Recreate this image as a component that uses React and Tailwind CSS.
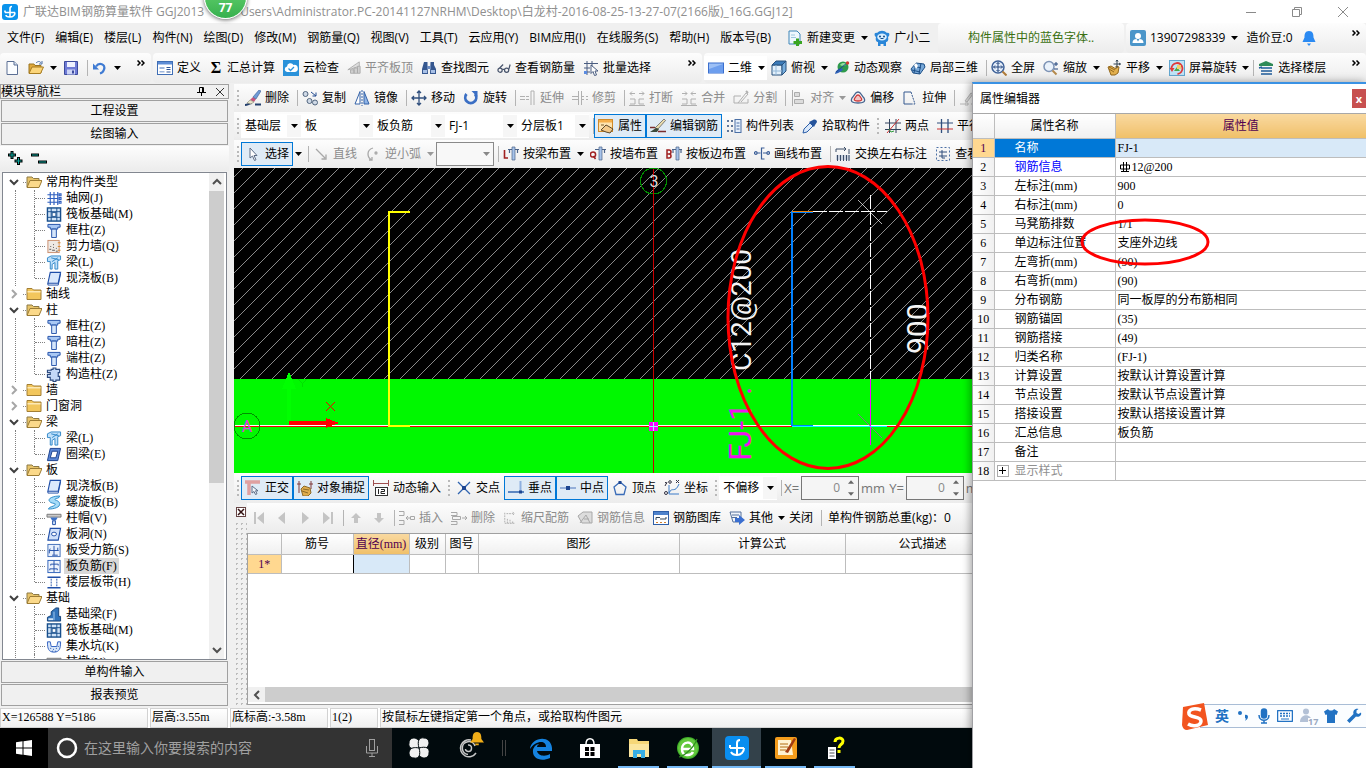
import React from 'react';
import clsx from 'clsx';

/* ── Icons, all on a 16x16 grid ── */
const icons = {
  app: <><rect width="16" height="16" rx="3" fill="#0a93ec" /><path d="M8 13V4.500a2 2 0 0 1 2-2M3 8.500h10M3 8.500v-2M13 8.500C13 11 11 13 8 13s-4-1-4-2" stroke="#fff" strokeWidth="1.600" fill="none" /></>,
  file: <><path d="M3 1.500h7l3.500 3.500v9.500H3z" fill="#fbfdff" stroke="#5b6f94" /><path d="M10 1.500V5h3.500" fill="#d7e3f3" stroke="#5b6f94" /></>,
  open: <><path d="M1 4h5l1 1.500h6V13H1z" fill="#e0a83a" stroke="#9a7420" /><path d="M1 13.500 4 7h11.500l-3 6.500z" fill="#fbd57a" stroke="#a87d22" /><path d="M8 3c2-2 4-2 5 0M14 1v3h-3" stroke="#4a6fa5" fill="none" /></>,
  save: <><path d="M1.500 1.500h13v13h-13z" fill="#6f7bd6" stroke="#3c4a9c" /><path d="M4 2h8v5H4z" fill="#eef1ff" /><path d="M4 9.500h8v5H4z" fill="#cdd5f6" /><path d="M9 10.500h2v3H9z" fill="#3c4a9c" /></>,
  undo: <><path d="M4 6.500C7 2 14 4 12 9.500 11.500 11.500 9.500 13 8 13.500" stroke="#3f7bd3" strokeWidth="2.200" fill="none" /><path d="M1 3.500v6h6z" fill="#3f7bd3" /></>,
  define: <><rect x=".5" y="1.500" width="15" height="13" fill="#fff" stroke="#3f6eb5" /><path d="M1 2h14v2.500H1z" fill="#5d8dd6" /><path d="M2.500 7h5v2h-5zM2.500 11h5v1.500h-5z" fill="#9fb7dd" /><path d="M9.500 7.500h4M9.500 9.500h4M9.500 12h4" stroke="#2f5597" /></>,
  cloud: <><rect width="16" height="16" fill="#2a92da" /><path d="M4 12a2.800 2.800 0 0 1 0-5.500A3.500 3.500 0 0 1 10.500 5 3.200 3.200 0 0 1 12 12z" fill="#fff" /><path d="m5.500 8.500 2 2L11 7" stroke="#2a92da" strokeWidth="1.300" fill="none" /></>,
  flat: <g fill="none" stroke="#a9a9a9"><path d="M1 10 11 3l3-2v5L5 9z" fill="#dedede" /><path d="M4 10h4v4H4zM8 8h4v6H8zM12 6h3v8h-3z" fill="#cfcfcf" /></g>,
  find: <><path d="M3 2h3.500v3L7 14H1V9zM9.500 2H13v3l2 4v5H9z" fill="#35578f" /><path d="M6 6h4v3H6z" fill="#6d8cc0" /><path d="M2 10h4v3H2zM10 10h4v3h-4z" fill="#a8c0e6" /></>,
  glasses: <g fill="none" stroke="#47536b" strokeWidth="1.400"><circle cx="3.500" cy="10.500" r="2.400" /><circle cx="11" cy="10.500" r="2.400" /><path d="M6 9.500h2.500M3 8l4-4M13.500 9.500 15 4" /></g>,
  batch: <><path d="M1 3.500h14M1 8h6M1 12h6M4 1v14M9 1v6" stroke="#4a5d80" fill="none" /><path d="M1 11h3v3H1z" fill="#5a8be0" /><path d="m8 5 7 6h-3l1.500 4-2 .5-1.500-4-2 2z" fill="#fff" stroke="#4a5d80" /></>,
  plane: <><rect x=".5" y="3" width="15" height="10" fill="#9dc0f6" stroke="#3b6fce" /><path d="M1 9 15 4v9H1z" fill="#6d9eee" /></>,
  cube: <><path d="M1 5h10v10H1z" fill="#e3f0fb" stroke="#27507c" /><path d="m1 5 4-4h10l-4 4z" fill="#3b7ab8" stroke="#27507c" /><path d="m11 15 4-4V1l-4 4z" fill="#78aede" stroke="#27507c" /><path d="M1 11h10M5 5v10" stroke="#93b8d8" /></>,
  orbit: <><circle cx="9" cy="7" r="5.500" fill="#2f9a4c" /><path d="M6 5c2-3 5-2 6-1s-3 3-6 1" fill="#8fdc9c" /><path d="M1 14C2 8 8 8 9 9s-4 4-8 5" fill="#2f62b8" /><path d="M2 12 13 3" stroke="#1f4b94" fill="none" /><circle cx="13.500" cy="3" r="1.700" fill="#d43b2f" /></>,
  local3d: <><path d="m1 9 5-6 8 1 1 3-5 7-7-1z" fill="#78a8d8" stroke="#1d4f87" /><path d="m4 6 7 2M6 3 4 13M11 3l-2 11M2 10l8 2" stroke="#1d4f87" fill="none" /><path d="m4 5 2-2 2 3-2 3z" fill="#fff" /></>,
  full: <><circle cx="7" cy="7" r="6" fill="#e6effb" stroke="#3f6299" strokeWidth="1.500" /><path d="M7 2.500v9M2.500 7h9M5.500 4 7 2.500 8.500 4M5.500 10 7 11.500 8.500 10M4 5.500 2.500 7 4 8.500M10 5.500 11.500 7 10 8.500" stroke="#23457c" fill="none" /><path d="m11.500 11.500 4 4" stroke="#b07c3a" strokeWidth="2" /></>,
  zoom: <><circle cx="6" cy="6.500" r="5" fill="#eaf2fb" stroke="#7d93b5" strokeWidth="1.500" /><path d="m9.500 10.500 4 4" stroke="#b58a4c" strokeWidth="2" /><path d="M11 4h4M13 2v4M11 9h4" stroke="#23457c" /></>,
  hand: <><path d="M2 7l3-1 5 3V6l3 1-1 6-3 2H5z" fill="#e3b04e" stroke="#94691f" /><path d="M3 9l5 3M3 7l6 3" stroke="#94691f" /><path d="M11 0v8M7.500 4h7M10 1.500 11 0l1 1.500M13 3l1.500 1L13 5" stroke="#345" fill="none" /></>,
  screenRotate: <><rect x=".5" y=".5" width="15" height="15" fill="#bfe3f7" stroke="#62a6cf" /><path d="M2.500 9a5.500 5.500 0 1 1 6 5" stroke="#e0383a" strokeWidth="1.800" fill="none" /><path d="M0.500 8h5L3 12z" fill="#e0383a" /><path d="m5 11 3-4 3 4z" fill="#4ca64c" /><path d="M8 5h4v4H8z" fill="#f2d16b" /></>,
  floors: <><path d="M1 4 8 1l7 3v2H1z" fill="#2f8a57" /><path d="M3 8h11M1 8l3-1M3 11h11M3 14h11" stroke="#1e5b99" strokeWidth="1.600" /></>,
  change: <><path d="M2 1h8l3 3v10H2z" fill="#eef7fd" stroke="#3e86b8" /><path d="M4 5h4M4 7.500h5" stroke="#9cc6de" /><path d="M9 8.500h3v2.500h3v3h-3V16H9v-2H6.500v-3H9z" fill="#3aa522" /></>,
  robot: <><path d="M2 7C0 6 0 2 3 3c3-3 7-3 10 0 3-1 3 3 1 4 1 4-1 5-2 5v4H9.500v-2h-3v2H4v-4c-1 0-3-1-2-5z" fill="#2a86d8" /><ellipse cx="8" cy="7" rx="4.800" ry="3.400" fill="#d9eeff" /><circle cx="6" cy="6.500" r="1" fill="#124c86" /><circle cx="10" cy="6.500" r="1" fill="#124c86" /><path d="M6.500 8.500h3" stroke="#124c86" /></>,
  user: <><rect width="16" height="16" rx="2" fill="#4a95c9" /><circle cx="8" cy="6" r="3" fill="#fff" /><path d="M2.500 13c0-4 3-4 5.500-4s5.500 0 5.500 4z" fill="#fff" /><path d="m6.500 9 1.500 2.500L9.500 9z" fill="#4a95c9" /></>,
  bell: <><path d="M8 1c4 0 4.500 3 4.500 6.500L14.500 12h-13l2-4.500C3.500 4 4 1 8 1z" fill="#2b8af2" /><path d="M6 13.500h4L8 16z" fill="#2b8af2" /></>,
  erase: <><path d="M0 15c3 0 4-2 7-2M10 14.500h6" stroke="#24406e" strokeWidth="2" fill="none" /><path d="m5 10 4 2 2-3-3-2z" fill="#c8547a" /><path d="m8 7 3 2 5-8-2-1z" fill="#6f9bd6" stroke="#3a5c93" strokeWidth=".6" /><path d="m2 13 3-3 4 2-3 2z" fill="#e9e4c8" stroke="#887" strokeWidth=".6" /></>,
  copy: <g fill="#cfd9e6" stroke="#52667f"><circle cx="3.500" cy="4" r="2.500" /><circle cx="7.500" cy="11" r="2.500" /><circle cx="13" cy="12.500" r="2.500" /><path d="m9 2 5 4M14 2.500V6h-3.500" fill="none" stroke="#234a8f" /></g>,
  mirror: <g stroke="#3563a8"><path d="M6 1.500V14H1z" fill="#fff" /><path d="M10 1.500V14h5z" fill="#8fb4e6" /><path d="M8 0v16" strokeDasharray="2 1" /></g>,
  move: <path d="M8 1v14M1 8h14M6 3l2-2 2 2M6 13l2 2 2-2M3 6 1 8l2 2M13 6l2 2-2 2" stroke="#304f7d" strokeWidth="1.300" fill="none" />,
  rotate: <><path d="M3.500 4a5.500 5.500 0 1 0 8.500 0" stroke="#3b6fc4" strokeWidth="2.800" fill="none" /><path d="M8.500 1h6v6z" fill="#3b6fc4" /></>,
  extend: <g stroke="#b0b0b0" fill="none"><path d="M0 6.500h5M0 9.500h5M6 6.500h3M6 9.500h3" /><path d="M11 1v14M14 1v14M11 1h3" /></g>,
  trim: <g stroke="#b0b0b0" fill="none"><path d="M0 6.500h6M0 9.500h6M10 6.500h2M14 6.500h2M10 9.500h2M14 9.500h2" /><path d="M6.500 1v14M9.500 1v14" /></g>,
  breakOff: <g stroke="#b0b0b0" fill="none"><path d="M1 3.500h5M10 3.500h5M3 1.500 1 3.500l2 2M13 1.500l2 2-2 2M1 9h5v5H1M15 9h-5v5h5M0 15.500h16" /></g>,
  merge: <g stroke="#b0b0b0" fill="none"><path d="M1 3.500h5M10 3.500h5M4 1.500l2 2-2 2M12 1.500l-2 2 2 2M1 9h5v5H1M15 9h-5v5h5M0 15.500h16" /></g>,
  split: <g stroke="#b0b0b0" fill="none"><path d="M1 6h7M1 13h14V9M1 6v7M5 13 13 3l2 1-7 8" /><path d="m13 1 2 2" strokeWidth="2" /></g>,
  align: <g stroke="#adadad" fill="#dcdcdc"><path d="M2.500 0v16" /><path d="M4.500 2.500h5v4h-5zM4.500 9.500h9v4h-9z" /></g>,
  offset: <g fill="none"><path d="M8 2c3 0 3 3 6 6 2 4-1 5-6 5s-8-1-6-5c3-3 3-6 6-6z" stroke="#46648f" strokeWidth="1.300" /><path d="M8 5c2 0 2 2 3.500 3.500 1 2-1 2.500-3.500 2.500s-4.500-.5-3.500-2.500C6 7 6 5 8 5z" stroke="#cf3b3b" strokeWidth="1.300" fill="#f2c3c3" /></g>,
  stretch: <g fill="none" stroke="#35588f"><path d="M9 2H2v12h7" /><path d="m9 2 4 12H9" strokeDasharray="2 1" /></g>,
  brush: <g fill="none" stroke="#b4b4b4"><path d="M1 14h4M12 14h3" /><path d="m6 11 6-8 2 1-6 8z" fill="#d9d9d9" /><path d="M6 13h3v2H6z" /></g>,
  props: <><rect x=".5" y="1.500" width="14" height="12" fill="#fde3b0" stroke="#d08a2a" /><path d="M1 2h13v2.500H1z" fill="#f4ae4a" /><path d="m3 12 5-5 2 1 5 3-3 4-4-1z" fill="#f3c98a" stroke="#5c472a" /><path d="M3 7h3" stroke="#7a5a2a" /></>,
  pen: <><path d="M0 9.500h5M8 13.500h8" stroke="#7a2e2e" strokeWidth="1.300" /><path d="m5 10 9-9 1.500 1.500L8 11z" fill="#e9dcae" stroke="#555" strokeWidth=".7" /><path d="m0 14 6-4 3 1-2 3z" fill="#3c4a3a" /></>,
  list: <><path d="M1 3h2M1 8h2M1 13h2M5 3h2M5 8h2M5 13h2" stroke="#304f7d" strokeWidth="1.500" /><rect x="9" y="1.500" width="6" height="13" fill="#e6effb" stroke="#4a6fa5" /><path d="M10.500 5h3M10.500 8h3M10.500 11h3" stroke="#4a6fa5" /></>,
  picker: <><path d="m1 15 1-4 6-6 3 3-6 6z" fill="#d9e8fa" stroke="#2c5ea8" /><path d="m7 4 5 5 1-2 2-3c0-2-2-3-4-2L9 3z" fill="#26549c" /></>,
  twoPoint: <><path d="M0 5h16M0 11.500h16M4.500 1v14M11 1v14" stroke="#32435e" fill="none" /><path d="M2 15 14 1" stroke="#c33" /><path d="m4 11 2 3 3-1" stroke="#2a9a3a" fill="none" /></>,
  parallel: <><path d="M4.500 1v14M11 1v14" stroke="#304f7d" strokeWidth="1.300" /><path d="M0 5h16" stroke="#304f7d" /><path d="M0 11h16" stroke="#c33" /></>,
  pointer: <path d="M5 2v10l2.500-2 2 4.500 1.500-.7L9 9.500h3z" fill="#fff" stroke="#5c6c86" />,
  lineDraw: <g fill="none" stroke="#a8a8a8" strokeWidth="1.300"><path d="m3 3 9 9M8.500 13H13V8.500" /></g>,
  arc: <g fill="none" stroke="#a8a8a8" strokeWidth="1.300"><path d="M8 2C1 4 2 12 7 14M4 14h3v-3" /><circle cx="11" cy="7" r="1" /></g>,
  beam: <><path d="M1.500 4v8H5" stroke="#a02020" strokeWidth="1.600" fill="none" /><path d="M5 3.500h11M14.500 3.500V7M6.500 3.500V7" stroke="#4a6288" strokeWidth="1.200" fill="none" /><path d="M9 1h3v13H9z" fill="#a7c3ea" stroke="#4a6288" strokeWidth=".7" /></>,
  wall: <><circle cx="3" cy="8.500" r="2.600" stroke="#a02020" strokeWidth="1.500" fill="none" /><path d="m3.500 10 2 3" stroke="#a02020" strokeWidth="1.500" /><path d="M5 3.500h11M14.500 3.500V7" stroke="#4a6288" strokeWidth="1.200" fill="none" /><path d="M9 1h3v13H9z" fill="#a7c3ea" stroke="#4a6288" strokeWidth=".7" /></>,
  slabEdge: <><path d="M1 4v8h2a2 2 0 0 0 0-4H1h2a2 2 0 0 0 0-4z" stroke="#a02020" strokeWidth="1.500" fill="none" /><path d="M6 3.500h10M15 3.500V7M7 3.500V7" stroke="#4a6288" strokeWidth="1.200" fill="none" /><path d="M10 1h3v13h-3z" fill="#a7c3ea" stroke="#4a6288" strokeWidth=".7" /></>,
  lineSet: <g fill="none" stroke="#3c5f98" strokeWidth="1.200"><circle cx="1.800" cy="7" r="1.300" /><path d="M3 7h3.500M9 7h4" /><circle cx="14.200" cy="7" r="1.300" /><path d="M10.500 2H7.500v11h3" /></g>,
  swap: <><path d="M1 6V3h10M14 8V3M9 1l2 2-2 2" stroke="#3b4c66" fill="none" /><path d="M1 9h14v5H1z" fill="#c9d1de" /><path d="M2.500 9v6M5.500 9v6M8.500 9v6M11.500 9v6M14 9v6" stroke="#3b4c66" /></>,
  viewLayout: <><rect x="1.500" y="1.500" width="13" height="13" fill="none" stroke="#4a6fa5" strokeDasharray="2 2" /><path d="M4 6h8M4 10h8M7 4v8h3" stroke="#304f7d" fill="none" /></>,
  ortho: <><path d="M0 2h15M4 1v14" stroke="#dfa0a0" strokeWidth="3.500" /><path d="M7 6v7l2-1.500 1.500 3 1.500-.7-1.500-3h2.500z" fill="#f2f6fb" stroke="#5c6c86" /></>,
  snap: <><path d="M2 1v12M14 1v8M0 4h4M12 4h4" stroke="#803a3a" fill="none" /><path d="m4 9 3-3 6 2 1 5-3 3H6z" fill="#e0ad4d" stroke="#8c6a28" /><path d="m6 9 6 1M5 11l6 2" stroke="#8c6a28" /></>,
  dynInput: <><path d="M.5 0v6M15.500 0v6M.5 3.500h15" stroke="#a05050" fill="none" /><rect x="2.500" y="7.500" width="12" height="8" fill="#fff" stroke="#333" /><path d="M5.500 9v5M8 9.500h3.500v2H8v2h4" stroke="#222" fill="none" /></>,
  cross: <><path d="M2 2l12 12M14 2 2 14" stroke="#2f64b0" strokeWidth="1.300" /><path d="M6 6h4v4H6z" fill="#1d4590" /></>,
  perp: <><path d="M12.500 1v10" stroke="#8fb0e0" strokeWidth="2" /><path d="M0 12h16" stroke="#2f64b0" strokeWidth="1.500" /><path d="M11 10.500h3v3h-3z" fill="#1d4590" /></>,
  mid: <><path d="M0 8h16" stroke="#6b8fc9" strokeWidth="1.300" /><path d="M6 6h4v4H6z" fill="#1d4590" /></>,
  vertex: <><path d="m8 2 6 5-2 7.500H4L2 7z" fill="none" stroke="#3a6cb8" strokeWidth="1.300" /><path d="M6.500 1h3v3h-3z" fill="#1d4590" /></>,
  coord: <><path d="M5 5v9h10M5 13c3-7 6 1 10-9" stroke="#3a7bc8" fill="none" /><path d="m1 2 2 2M3 2 1 6M12 0l3 3M15 0l-3 3" stroke="#334" fill="none" /><circle cx="2" cy="13" r="1.500" stroke="#334" fill="none" /><circle cx="6" cy="2" r="1.300" stroke="#334" fill="none" /></>,
  first: <path d="M3 2h2v12H3zM13 2v12L6 8z" fill="#c4c4c4" />,
  prev: <path d="M11 2v12L4 8z" fill="#c4c4c4" />,
  next: <path d="M5 2v12l7-6z" fill="#c4c4c4" />,
  last: <path d="M3 2v12l7-6zM11 2h2v12h-2z" fill="#c4c4c4" />,
  up: <path d="m8 3 5 5h-3v5H6V8H3z" fill="#c4c4c4" />,
  down: <path d="m8 13 5-5h-3V3H6v5H3z" fill="#c4c4c4" />,
  insertRow: <g fill="none" stroke="#a8a8a8"><path d="M0 1.500h5v4H0M0 10.500h5v4H0M7 8h4M9 6 7 8l2 2" /><path d="M11.500 6.500h4v3h-4z" /></g>,
  removeRow: <g fill="none" stroke="#a8a8a8"><path d="M0 2.500h6v3H0M1.500 6.500h8v3h-8zM0 11.500h6v3H0M11 8h5M14 6l2 2-2 2" /></g>,
  scale: <g fill="none" stroke="#a8a8a8"><path d="M2 2v12M4 3h9M11 1l2 2-2 2M5 9v5M8 10v4M11 12v2M2 14h12" strokeDasharray="2 1" /></g>,
  barInfo: <g fill="#dcdcdc" stroke="#a8a8a8"><path d="m1 6 5-4h9v11H5z" /><path d="m3 13 6-8 4 8M7 9h5" fill="none" /></g>,
  barLib: <><rect x=".5" y="1.500" width="15" height="13" fill="#fff" stroke="#2e5fa8" /><path d="M1 2h14v3H1z" fill="#4f83cc" /><path d="M3 10V7.500h4M7 9h6V7" stroke="#345" fill="none" /><path d="M3 12.500h10" stroke="#d08030" strokeDasharray="2 2" /></>,
  other: <><path d="M1 2h11v10H4z" fill="#f1f5fb" stroke="#55719c" /><path d="M3 5h7M3 7.500h5" stroke="#55719c" /><path d="M6 8h4V5l6 5-6 5v-3H6z" fill="#3b6fd0" /></>,
  /* tree */
  folderOpen: <><path d="M1 3h5l1.500 1.500H13V13H1z" fill="#e8c46a" stroke="#8e7a45" /><path d="M1 13.500 4 6.500h12L13 13.500z" fill="#fbd98a" stroke="#9c7c34" /></>,
  folder: <><path d="M1 2.500h5L7.500 4H15v9.500H1z" fill="#f2c65c" stroke="#a37f35" /><path d="M1.500 5h13v1.500h-13z" fill="#fde9b4" /></>,
  grid: <path d="M1 4h11M1 8h11M1 12h11M4 1v14M8 1v14M12 1v14M13.500 3h2v2h-2zM13.500 7h2v2h-2zM13.500 11h2v2h-2z" stroke="#2f5fc0" strokeWidth="1.200" fill="none" />,
  raft: <><rect x="1" y="1" width="14" height="14" fill="#cfe3f7" stroke="#174e8c" strokeWidth="1.500" /><path d="M5 1v14M11 1v14M1 5h14M1 11h14" stroke="#174e8c" /><rect x="6" y="6" width="4" height="4" fill="#fff" stroke="#174e8c" /></>,
  column: <><path d="M1.500 1.500h13v3h-2.500v2H4v-2H1.500z" fill="#a9c8f4" stroke="#1f4ea8" /><path d="M5.500 6.500h5v9h-5z" fill="#d5e6fb" stroke="#1f4ea8" /></>,
  shear: <><rect x="1.500" y="1.500" width="12" height="13" fill="#efe9e4" stroke="#c98c6c" /><path d="M3 11h2M6 12h3M4 8h1M10 10h1M7 9h1M10 13h2M7 6h1" stroke="#555" /><path d="M12 4h3M12 8h3M12 12h3" stroke="#d98a2f" /></>,
  beamIcon: <><path d="m1 3 4-2h10v4l-3 1v9H9V8l-3 2v5H4V7H1z" fill="#bfe0fa" stroke="#2f86c8" /><path d="m5 3 8 2M6 7l6-4" stroke="#2f86c8" /></>,
  slab: <><path d="M4 1.500h11L12.500 13H1.500z" fill="#dbe9fc" stroke="#1f4ea8" strokeWidth="1.200" /><path d="M1.500 13v2h11l2.500-12" fill="none" stroke="#1f4ea8" /></>,
  puzzle: <path d="M5 2.500h2V1h3v1.500h4V6h-1.500v4H14v4h-4v1.500H7V14H4v-3H1V8h3V6H1V3.500h4z" fill="#c3d8f7" stroke="#2c4a7f" strokeWidth="1.200" />,
  ring: <><path d="M4 1.500h11L12 14.500H1z" fill="#5b87d6" stroke="#173e8c" /><path d="M6 4.500h6l-2 7H4z" fill="#fff" stroke="#173e8c" /></>,
  spiral: <path d="M14 1C9 1 1 3 3 6.500S11 8 9 10.500 3 12 2 15c6 0 13-2 12-6S8 6 9 4.500 14 4 14 1z" fill="#a5dcf8" stroke="#2b8ac8" />,
  cap: <><path d="M.5 3.500h15v3H.5z" fill="#c9c9c9" stroke="#777" /><path d="m4 7 2 3h4l2-3z" fill="#3c72c8" /><path d="M6.500 10.500h3v4h-3z" fill="#d5e6fb" stroke="#1f4ea8" /></>,
  hole: <><path d="M4 1.500h11L12.500 14H1.500z" fill="#cfe0fa" stroke="#1f4ea8" strokeWidth="1.200" /><ellipse cx="8" cy="7.500" rx="2.600" ry="2" fill="#fff" stroke="#1f4ea8" /></>,
  forceBar: <><rect x="1.500" y="1.500" width="13" height="13" fill="#e8f0fc" stroke="#3e6cb8" /><path d="M3 8h10M4 6 3 8v3M8 3v10M6 13h6M12 5v3" stroke="#1f4ea8" fill="none" /></>,
  negBar: <><rect x="1.500" y="1.500" width="13" height="13" fill="#eef4fd" stroke="#2b5fb8" /><path d="M4.500 7V5.500h8V7M3.500 12v-1.500h8V12M8 2v12" stroke="#1f4ea8" fill="none" /></>,
  band: <><path d="M1 2.500h14M1 13.500h14" stroke="#1f4ea8" strokeWidth="1.600" /><path d="M5 4v9M11 4v9" stroke="#1f4ea8" strokeDasharray="2 1" /></>,
  footBeam: <><path d="m1 11 4-2V5l5-4h3v9h2v5H1z" fill="#3274bb" stroke="#123f75" /><path d="M2 12h5v2H2z" fill="#cfe3f7" /><path d="M8 5v9" stroke="#a7cdf2" /></>,
  sump: <><path d="M1 3h3l1 5h6l1-5h3c0 7-1 11-7 11S1 10 1 3z" fill="#d8e7fa" stroke="#2f5fc0" /><path d="M4 10h1M7 11h1M10 10h1M6 13h1M9 13h1M12 8h1" stroke="#1f4ea8" /></>,
};

const Icon = ({ name, className = 'size-4' }) => (
  <svg viewBox="0 0 16 16" className={clsx('shrink-0', className)} aria-hidden="true">{icons[name]}</svg>
);

const CaretIcon = ({ className = 'w-[7px] text-black' }) => (
  <svg viewBox="0 0 7 4" className={clsx('h-1 shrink-0', className)} aria-hidden="true"><path d="M0 0h7L3.500 4z" fill="currentColor" /></svg>
);

/* ── Toolbar parts ── */
const bar = 'bg-linear-to-b from-[#fdfdfd] to-[#ececec]';

const Grip = () => (
  <span className="flex h-4 w-[7px] shrink-0 flex-col items-center justify-between">
    {[0, 1, 2, 3].map((i) => <span key={i} className="size-0.5 bg-[#b9b9b9]" />)}
  </span>
);

const Sep = () => <span className="h-4 w-[5px] shrink-0 border-r border-[#b4b4b4]" />;

const Caret = ({ tight, disabled }) => (
  <button aria-label="展开" className={clsx('flex h-6 shrink-0 items-center justify-center', tight ? 'w-2' : 'w-[11px]', disabled ? 'text-[#999]' : 'text-black')}>
    <CaretIcon className="w-[7px]" />
  </button>
);

const Tool = ({ icon, label, active, disabled, narrow }) => (
  <button
    className={clsx(
      'flex h-6 shrink-0 items-center gap-1 border px-[3px] whitespace-nowrap',
      active ? 'border-[#0078d7] bg-[#dfebf6]' : 'border-transparent',
      disabled ? 'text-[#8c8c8c]' : 'text-black'
    )}
  >
    {icon === 'sigma' ? <span className="w-3.5 font-['Liberation_Serif'] text-[16px] font-bold">Σ</span>
      : icon && <Icon name={icon} className={narrow ? 'h-4 w-3.5' : 'size-4'} />}
    {label}
  </button>
);

const IconTool = ({ icon, label, className = 'w-6' }) => (
  <button aria-label={label} className={clsx('flex h-6 shrink-0 items-center justify-center', className)}><Icon name={icon} /></button>
);

const Combo = ({ label, value, className }) => (
  <span className={clsx('relative flex h-6 shrink-0 items-center', className)}>
    <select aria-label={label} className="h-full w-full appearance-none bg-white pr-3 pl-1 text-[12px]" defaultValue={value}>
      <option>{value}</option>
    </select>
    <span className="pointer-events-none absolute inset-y-px right-0 flex w-3.5 items-center justify-center bg-[#f6f6f6]"><CaretIcon /></span>
  </span>
);

const More = () => (
  <button aria-label="更多" className="mt-1 mr-1 flex h-3 w-3 shrink-0 items-center justify-center self-start">
    <svg viewBox="0 0 8 6" className="h-1.5 w-2" fill="none" stroke="#000" strokeWidth="1.500"><path d="m.5.500 2.500 2.500L.5 5.500M4.500.500 7 3 4.500 5.500" /></svg>
  </button>
);

const NumBox = ({ id, label }) => (
  <>
    <label htmlFor={id} className="px-0.5 text-[13px] text-[#777]">{label}</label>
    <span className="relative flex h-6 w-[58px] shrink-0 items-center border border-[#777] bg-[#f5f5f5]">
      <input id={id} defaultValue="0" className="w-full bg-transparent pr-[18px] text-right text-[12px] text-[#888]" />
      <span className="pointer-events-none absolute right-1 flex flex-col gap-2 text-[#666]">
        <CaretIcon className="w-1.5 rotate-180" />
        <CaretIcon className="w-1.5" />
      </span>
    </span>
    <span className="px-0.5 text-[13px] text-[#777]">mm</span>
  </>
);

/* ── Data ── */
const menus = ['文件(F)', '编辑(E)', '楼层(L)', '构件(N)', '绘图(D)', '修改(M)', '钢筋量(Q)', '视图(V)', '工具(T)', '云应用(Y)', 'BIM应用(I)', '在线服务(S)', '帮助(H)', '版本号(B)'];

const tree = [
  { label: '常用构件类型', items: [['grid', '轴网(J)'], ['raft', '筏板基础(M)'], ['column', '框柱(Z)'], ['shear', '剪力墙(Q)'], ['beamIcon', '梁(L)'], ['slab', '现浇板(B)']] },
  { label: '轴线' },
  { label: '柱', items: [['column', '框柱(Z)'], ['column', '暗柱(Z)'], ['column', '端柱(Z)'], ['puzzle', '构造柱(Z)']] },
  { label: '墙' },
  { label: '门窗洞' },
  { label: '梁', items: [['beamIcon', '梁(L)'], ['ring', '圈梁(E)']] },
  { label: '板', items: [['slab', '现浇板(B)'], ['spiral', '螺旋板(B)'], ['cap', '柱帽(V)'], ['hole', '板洞(N)'], ['forceBar', '板受力筋(S)'], ['negBar', '板负筋(F)'], ['band', '楼层板带(H)']] },
  { label: '基础', items: [['footBeam', '基础梁(F)'], ['raft', '筏板基础(M)'], ['sump', '集水坑(K)'], ['cap', '柱墩(Y)']] },
];

const props = [
  ['名称', 'FJ-1'], ['钢筋信息', '12@200'], ['左标注(mm)', '900'], ['右标注(mm)', '0'], ['马凳筋排数', '1/1'], ['单边标注位置', '支座外边线'],
  ['左弯折(mm)', '(90)'], ['右弯折(mm)', '(90)'], ['分布钢筋', '同一板厚的分布筋相同'], ['钢筋锚固', '(35)'], ['钢筋搭接', '(49)'], ['归类名称', '(FJ-1)'],
  ['计算设置', '按默认计算设置计算'], ['节点设置', '按默认节点设置计算'], ['搭接设置', '按默认搭接设置计算'], ['汇总信息', '板负筋'], ['备注', ''], ['显示样式', ''],
];

const song = "font-['Liberation_Serif','Noto_Sans_CJK_SC',serif]";

/* ── Title, menu and main toolbar ── */
const TitleBar = () => (
  <header className="relative flex h-[23px] shrink-0 items-center bg-white pl-0.5 text-[#8f8f8f]">
    <Icon name="app" />
    <h1 className="ml-[5px] flex min-w-0 flex-1 gap-9 text-[12px] whitespace-nowrap">
      <span>广联达BIM钢筋算量软件 GGJ2013</span>
      <span className="truncate">Users\Administrator.PC-20141127NRHM\Desktop\白龙村-2016-08-25-13-27-07(2166版)_16G.GGJ12]</span>
    </h1>
    <div className="flex text-[#8a8a8a]">
      {[['最小化', 'M0 5.500h10'], ['还原', 'M.5 2.500h7v7h-7zM2.500 2.500v-2h7v7h-2'], ['关闭', 'M0 0l10 10M10 0 0 10']].map(([label, d]) => (
        <button key={label} aria-label={label} className="flex h-[22px] w-[46px] items-center justify-center">
          <svg viewBox="0 0 10 10" className="size-2.5 overflow-visible" fill="none" stroke="currentColor"><path d={d} /></svg>
        </button>
      ))}
    </div>
    <div className="absolute -top-6 left-[204px] flex size-[43px] items-end justify-center rounded-full border border-white bg-linear-to-b from-[#6fdc78] to-[#36b04e] pb-1 text-[12px] leading-3 font-bold text-white shadow-[0_1px_4px_rgba(0,0,0,0.6)]">77</div>
  </header>
);

const MenuBar = () => (
  <nav className="flex h-[30px] shrink-0 items-center">
    <div className="flex gap-[11px] pr-3 pl-[7px]">
      {menus.map((m) => <a key={m} href="#" className="whitespace-nowrap">{m}</a>)}
    </div>
    <Tool icon="change" label="新建变更" />
    <Caret />
    <Tool icon="robot" label="广小二" />
    <div className={clsx('ml-1 flex h-full min-w-0 flex-1 items-center justify-center rounded-sm text-[#3a7010]', bar)}>构件属性中的蓝色字体..</div>
    <div className={clsx('ml-0.5 flex h-full w-[240px] shrink-0 items-center rounded-sm', bar)}>
      <Tool icon="user" label="13907298339" />
      <Caret />
      <span className="ml-1.5 whitespace-nowrap">造价豆:0</span>
      <span className="ml-1"><IconTool icon="bell" label="消息" /></span>
      <span className="flex-1" />
      <More />
    </div>
  </nav>
);

const MainToolbar = () => (
  <div className="flex h-[30px] shrink-0 gap-0.5 overflow-hidden">
    <div className={clsx('flex w-[151px] shrink-0 items-center rounded-sm', bar)}>
      <IconTool icon="file" label="新建" />
      <IconTool icon="open" label="打开" />
      <Caret />
      <IconTool icon="save" label="保存" />
      <Sep />
      <IconTool icon="undo" label="撤销" />
      <Caret />
      <span className="flex-1" />
      <More />
    </div>
    <div className={clsx('flex min-w-0 flex-1 items-center rounded-sm', bar)}>
      <Tool icon="define" label="定义" />
      <Tool icon="sigma" label="汇总计算" />
      <Tool icon="cloud" label="云检查" />
      <Tool icon="flat" label="平齐板顶" disabled narrow />
      <Tool icon="find" label="查找图元" />
      <Tool icon="glasses" label="查看钢筋量" narrow />
      <Tool icon="batch" label="批量选择" />
      <span className="flex-1" />
      <More />
    </div>
    <div className={clsx('flex w-[662px] shrink-0 items-center rounded-sm', bar)}>
      <span className="flex bg-white"><Tool icon="plane" label="二维" /><Caret /></span>
      <Tool icon="cube" label="俯视" />
      <Caret />
      <Tool icon="orbit" label="动态观察" />
      <Tool icon="local3d" label="局部三维" />
      <Sep />
      <Tool icon="full" label="全屏" />
      <Tool icon="zoom" label="缩放" />
      <Caret />
      <Tool icon="hand" label="平移" />
      <Caret />
      <Tool icon="screenRotate" label="屏幕旋转" />
      <Caret tight />
      <Sep />
      <Tool icon="floors" label="选择楼层" />
      <span className="flex-1" />
      <More />
    </div>
  </div>
);

/* ── Left navigation ── */
const NavButton = ({ children }) => (
  <button className="mx-px h-[22px] shrink-0 border border-[#a0a0a0] bg-[#f0f0f0] leading-4">{children}</button>
);

const Chevron = ({ d, className }) => (
  <svg viewBox="0 0 10 10" className={clsx('size-2.5 shrink-0', className)} fill="none" stroke="currentColor" strokeWidth="2"><path d={d} /></svg>
);

const Tree = () => (
  <div className="mx-0.5 flex min-h-0 flex-1 overflow-hidden border border-[#828790] bg-white">
    <ul className="min-w-0 flex-1 pt-px">
      {tree.map((group) => (
        <li key={group.label}>
          <div className="flex h-4 items-center">
            <Chevron d={group.items ? 'm1 3 4 4 4-4' : 'm3 1 4 4-4 4'} className={clsx('ml-1.5', group.items ? 'text-[#404040]' : 'text-[#a6a6a6]')} />
            <span className="ml-1 w-[3px] border-t border-dotted border-[#888]" />
            <Icon name={group.items ? 'folderOpen' : 'folder'} />
            <span className="ml-1 leading-4">{group.label}</span>
          </div>
          {group.items && (
            <ul className="ml-3 border-l border-dotted border-[#808080] pl-[18px]">
              {group.items.map(([icon, label], i) => (
                <li key={label} className="flex h-4 items-center">
                  <span className={clsx('self-start border-l border-dotted border-[#808080]', i === group.items.length - 1 ? 'h-2' : 'h-4')} />
                  <span className="w-2.5 border-t border-dotted border-[#808080]" />
                  <Icon name={icon} className="ml-px h-[15px] w-4" />
                  <span className={clsx('ml-0.5 px-0.5 leading-4 whitespace-nowrap', icon === 'negBar' && 'bg-[#d9d9d9]')}>{label}</span>
                </li>
              ))}
            </ul>
          )}
        </li>
      ))}
    </ul>
    <div className="mr-0.5 flex w-[15px] shrink-0 flex-col items-center bg-[#f0f0f0] text-[#505050]">
      <Chevron d="m1 7 4-4 4 4" className="my-1" />
      <div className="h-3/5 w-full bg-[#cdcdcd]" />
      <Chevron d="m1 3 4 4 4-4" className="mt-auto mb-1" />
    </div>
  </div>
);

const Sidebar = () => (
  <aside className={clsx('flex w-[229px] shrink-0 flex-col gap-px pb-0.5', song)}>
    <div className="flex h-[15px] items-center border border-[#a0a0a0]">
      <h2 className="flex-1 leading-3">模块导航栏</h2>
      <button aria-label="固定" className="mr-2.5">
        <svg viewBox="0 0 9 9" className="size-[9px]" fill="none" stroke="#000"><path d="M2.500 5V.5h4V5M5.500 0v5M0 5.500h9M4.500 5.500V9" /></svg>
      </button>
      <button aria-label="关闭" className="mr-1">
        <svg viewBox="0 0 8 8" className="size-2" stroke="#333"><path d="m0 0 8 8M8 0 0 8" /></svg>
      </button>
    </div>
    <NavButton>工程设置</NavButton>
    <NavButton>绘图输入</NavButton>
    <div className={clsx('flex h-[25px] items-center gap-2 px-[7px]', bar)}>
      <button aria-label="全部展开">
        <svg viewBox="0 0 16 15" className="h-[15px] w-4"><path d="M5 0v8M1 4h8M11.500 6v8M7.500 10h8" stroke="#000" strokeWidth="3" /><path d="M5 1v6M2 4h6M11.500 7v6M8.500 10h6" stroke="#0ba39a" /></svg>
      </button>
      <button aria-label="全部折叠">
        <svg viewBox="0 0 16 15" className="h-[15px] w-4"><path d="M0 4h8M7 11h9" stroke="#000" strokeWidth="3" /><path d="M1 4h6M8 11h7" stroke="#0ba39a" /></svg>
      </button>
    </div>
    <Tree />
    <NavButton>单构件输入</NavButton>
    <NavButton>报表预览</NavButton>
  </aside>
);

/* ── Drawing area ── */
const Drawing = () => (
  <section className="relative h-[305px] shrink-0" aria-label="绘图区">
    <svg className="absolute inset-0 h-full w-full bg-black" shapeRendering="crispEdges">
      <defs>
        <pattern id="hatch" width="16" height="16" patternUnits="userSpaceOnUse">
          <path d="M-1 10 10-1M8 17 17 8" stroke="#c4c4c4" strokeWidth=".7" />
        </pattern>
      </defs>
      <rect width="100%" height="211" fill="url(#hatch)" />
      <rect y="211" width="100%" height="94" fill="#00f800" />
      <path d="M419.500 0v305" stroke="#c80000" />
      <path d="M0 257.500h1132" stroke="#fff" />
      <path d="M0 258.500h1132" stroke="#f00000" />
      {/* user coordinate axes */}
      <path d="M55 255v-46m-4 10 4-10 4 10z" stroke="#00ff00" strokeWidth="4" fill="#0f0" />
      <path d="M55 255h38" stroke="#f00" strokeWidth="4" />
      <path d="m92 250 13 5-13 5z" fill="#f00" />
      <path d="m92 234 9 9m0-9-9 9" stroke="#f00000" />
      <path d="m64 211 4 4m5-4-5 5v3" stroke="#00e000" fill="none" />
      {/* placed bar */}
      <path d="M176 44h-21v214h21" stroke="#ff0" strokeWidth="2" fill="none" />
      {/* bar being edited */}
      <path d="M579 44h-21v214" stroke="#0080ff" strokeWidth="2" fill="none" />
      <path d="M558 43.500h21" stroke="#f08000" />
      <path d="M579 43.500h74" stroke="#fff" strokeDasharray="14 2" />
      <path d="M636.500 27v184" stroke="#fff" strokeDasharray="14 2" />
      <path d="m624 32 24 24" stroke="#fff" strokeWidth=".7" />
      <path d="M636.500 211v66" stroke="#f0f" />
      <path d="m624 246 24 24" stroke="#c03cc0" strokeWidth=".7" />
      <path d="M558 257.500h21" stroke="#0080ff" />
      <path d="M558 258.500h95" stroke="#0ff" />
      {/* grid bubbles */}
      <g fill="none" stroke="#009000">
        <circle cx="13" cy="258" r="13" />
        <circle cx="419.500" cy="13" r="13" />
      </g>
      <path d="M415 254h9v9h-9z" fill="#f0f" />
      <path d="M419.500 254v9M415 258.500h9" stroke="#9ff" />
      <g className="font-['Roboto',sans-serif]" shapeRendering="auto">
        <text x="13" y="264" textAnchor="middle" fontSize="16" fill="#e838e8">A</text>
        <text x="420" y="19" textAnchor="middle" fontSize="16" fill="#ddd">3</text>
        <text transform="translate(517 293) rotate(-90)" fontSize="32" fill="#f010f0">FJ-1 .</text>
        <text transform="translate(517 203) rotate(-90)" fontSize="28" fill="#f4f4f4">C12@200</text>
        <text transform="translate(694 186) rotate(-90)" fontSize="30" fill="#f4f4f4">900</text>
      </g>
    </svg>
    <svg className="pointer-events-none absolute inset-0 z-10 h-full w-full overflow-visible" fill="none">
      <ellipse cx="594" cy="149.500" rx="100" ry="151" stroke="#f00" strokeWidth="3" />
    </svg>
  </section>
);

/* ── Toolbars around the drawing ── */
const row = 'flex h-7 shrink-0 items-center overflow-hidden';

const EditBars = () => (
  <>
    <div className={clsx(row, bar)}>
      <Grip />
      <Tool icon="erase" label="删除" /><Sep />
      <Tool icon="copy" label="复制" />
      <Tool icon="mirror" label="镜像" /><Sep />
      <Tool icon="move" label="移动" />
      <Tool icon="rotate" label="旋转" /><Sep />
      <Tool icon="extend" label="延伸" disabled />
      <Tool icon="trim" label="修剪" disabled /><Sep />
      <Tool icon="breakOff" label="打断" disabled />
      <Tool icon="merge" label="合并" disabled />
      <Tool icon="split" label="分割" disabled /><Sep />
      <Tool icon="align" label="对齐" disabled /><Caret tight disabled />
      <Tool icon="offset" label="偏移" />
      <Tool icon="stretch" label="拉伸" /><Sep />
      <IconTool icon="brush" label="设置夹点" />
    </div>
    <div className={clsx(row, bar)}>
      <Grip />
      <Combo label="楼层" value="基础层" className="w-[60px]" />
      <Combo label="构件类型" value="板" className="w-[72px]" />
      <Combo label="构件" value="板负筋" className="w-[72px]" />
      <Combo label="名称" value="FJ-1" className="w-[72px]" />
      <Combo label="分层" value="分层板1" className="w-[72px]" />
      <Sep />
      <Tool icon="props" label="属性" active />
      <Tool icon="pen" label="编辑钢筋" active />
      <Tool icon="list" label="构件列表" />
      <Tool icon="picker" label="拾取构件" />
      <Grip />
      <Tool icon="twoPoint" label="两点" />
      <Tool icon="parallel" label="平行" />
    </div>
    <div className={clsx(row, bar)}>
      <Grip />
      <Tool icon="pointer" label="选择" active /><Caret /><Sep />
      <Tool icon="lineDraw" label="直线" disabled />
      <Tool icon="arc" label="逆小弧" disabled /><Caret disabled />
      <span className="relative flex h-6 w-[58px] shrink-0 items-center justify-end border border-[#8a8a8a] bg-[#f8f8f8] text-[#888]">
        <select aria-label="半径" disabled className="absolute inset-0 appearance-none" />
        <CaretIcon className="mr-[3px] w-[7px]" />
      </span>
      <Sep />
      <Tool icon="beam" label="按梁布置" /><Caret />
      <Tool icon="wall" label="按墙布置" />
      <Tool icon="slabEdge" label="按板边布置" />
      <Tool icon="lineSet" label="画线布置" /><Sep />
      <Tool icon="swap" label="交换左右标注" />
      <Tool icon="viewLayout" label="查看" />
    </div>
  </>
);

const SnapBar = () => (
  <div className={clsx('flex h-[30px] shrink-0 items-center overflow-hidden', bar)}>
    <Grip />
    <Tool icon="ortho" label="正交" active />
    <Tool icon="snap" label="对象捕捉" active />
    <Tool icon="dynInput" label="动态输入" />
    <Grip />
    <Tool icon="cross" label="交点" />
    <Tool icon="perp" label="垂点" active />
    <Tool icon="mid" label="中点" active />
    <Tool icon="vertex" label="顶点" />
    <Tool icon="coord" label="坐标" />
    <Grip />
    <Combo label="偏移方式" value="不偏移" className="w-[58px]" />
    <Sep />
    <NumBox id="offset-x" label="X=" />
    <NumBox id="offset-y" label="Y=" />
  </div>
);

const columns = [['', 'w-[33px]'], ['筋号', 'w-[72px]'], ['直径(mm)', 'w-14'], ['级别', 'w-9'], ['图号', 'w-[33px]'], ['图形', 'w-[201px]'], ['计算公式', 'w-[166px]'], ['公式描述', 'w-[155px]'], ['长度', 'w-auto']];

const BarEditor = () => (
  <section className="flex min-h-0 flex-1">
    <div className="flex w-[13px] shrink-0 flex-col bg-[#f0f0f0]">
      <button aria-label="关闭" className="mt-1 ml-0.5 flex size-[10px] items-center justify-center border border-[#644] bg-white">
        <svg viewBox="0 0 8 8" className="size-2" stroke="#311" strokeWidth="1.500"><path d="m1 1 6 6M7 1 1 7" /></svg>
      </button>
      <div className="mt-1 flex-1 bg-[radial-gradient(#bcbcbc_1px,transparent_1px)] bg-[size:5px_5px]" />
    </div>
    <div className="flex min-w-0 flex-1 flex-col pb-[3px]">
      <div className={clsx('flex h-[30px] shrink-0 items-center overflow-hidden', bar)}>
        <IconTool icon="first" label="首行" className="w-[23px]" />
        <IconTool icon="prev" label="上一行" className="w-[23px]" />
        <IconTool icon="next" label="下一行" className="w-[23px]" />
        <IconTool icon="last" label="末行" className="w-[23px]" />
        <Sep />
        <IconTool icon="up" label="上移" className="w-[23px]" />
        <IconTool icon="down" label="下移" className="w-[23px]" />
        <Sep />
        <Tool icon="insertRow" label="插入" disabled />
        <Tool icon="removeRow" label="删除" disabled />
        <Tool icon="scale" label="缩尺配筋" disabled narrow />
        <Tool icon="barInfo" label="钢筋信息" disabled />
        <Tool icon="barLib" label="钢筋图库" />
        <Tool icon="other" label="其他" /><Caret tight />
        <Tool label="关闭" /><Sep />
        <span className="ml-1.5 whitespace-nowrap">单构件钢筋总重(kg)：0</span>
      </div>
      <div className="flex min-h-0 flex-1 flex-col overflow-hidden border border-[#a0a0a0] bg-white">
        <table className={clsx('w-full table-fixed border-collapse leading-4', song)}>
          <thead>
            <tr className="h-5">
              {columns.map(([name, w]) => (
                <th key={name} className={clsx('border-r border-b border-[#bdbdbd] p-0 font-normal whitespace-nowrap', w, name === '直径(mm)' ? 'bg-linear-to-b from-[#f9d9a0] to-[#f0c068] text-[#500050]' : 'bg-linear-to-b from-white to-[#f0f0f0]')}>{name}</th>
              ))}
            </tr>
          </thead>
          <tbody>
            <tr className="h-[19px]">
              {columns.map(([name], i) => (
                <td key={name} className={clsx('border-r border-b border-[#bdbdbd] p-0 text-center', i === 0 && 'bg-[#ffd890] text-[#500050]', i === 1 && 'border-r-black', i === 2 && 'bg-[#d8e9f8]')}>{i === 0 && '1*'}</td>
              ))}
            </tr>
          </tbody>
        </table>
        <div className="mt-auto mb-0.5 flex h-[15px] items-center bg-[#cdcdcd]">
          <span className="flex h-full w-[17px] items-center justify-center bg-[#f0f0f0] text-[#505050]"><Chevron d="M7 1 3 5l4 4" /></span>
        </div>
      </div>
    </div>
  </section>
);

/* ── Property window ── */
const PropertyWindow = () => (
  <section className="absolute top-[82px] right-0 bottom-0 z-20 w-[394px] overflow-hidden border-t-2 border-l border-t-[#3a92e4] border-l-[#a0a0a4] bg-white shadow-[-2px_0_8px_rgba(0,0,0,0.35)]">
    <div className="flex h-[30px] items-center border-b border-[#a8a8a8] pl-[7px]">
      <h2 className="flex-1">属性编辑器</h2>
      <button aria-label="关闭" className="h-[19px] w-3.5 bg-[#c75050] text-[11px] leading-4 font-bold text-white">x</button>
    </div>
    <table className={clsx('w-full table-fixed border-collapse leading-4', song)}>
      <thead>
        <tr className="h-6">
          <th className="w-[21px] border-r border-b border-[#bdbdbd] bg-linear-to-b from-white to-[#f0f0f0]" />
          <th className="w-[121px] border-r border-b border-[#bdbdbd] bg-linear-to-b from-white to-[#f0f0f0] font-normal">属性名称</th>
          <th className="border-b border-[#bdbdbd] bg-linear-to-b from-[#f9d9a0] to-[#f0c068] font-normal whitespace-nowrap text-[#500050]">属性值</th>
        </tr>
      </thead>
      <tbody>
        {props.map(([name, value], i) => (
          <tr key={name} className="h-[19px]">
            <td className={clsx('border-r border-b border-[#bdbdbd] p-0 text-center leading-4', i === 0 ? 'bg-[#ffd890] text-[#500050]' : 'bg-linear-to-r from-white to-[#f0f0f0]')}>{i + 1}</td>
            <td className={clsx('relative border-r border-b border-[#bdbdbd] py-0 pr-0 pl-5 leading-4 whitespace-nowrap', i === 0 && 'bg-[#0078d7] text-white', i === 1 && 'text-[#0000ff]', i === 17 && 'text-[#909090]')}>
              {i === 17 && <button aria-label="展开" className="absolute top-[3px] left-0.5 flex size-3 items-center justify-center border border-[#aaa] text-black"><svg viewBox="0 0 7 7" className="size-[7px]" stroke="#000"><path d="M0 3.500h7M3.500 0v7" /></svg></button>}
              {name}
            </td>
            <td className={clsx('border-b border-[#bdbdbd] py-0 pr-0 pl-0.5 leading-4', i === 0 && 'bg-[#d8e9f8]')}>
              <span className="flex items-center">
                {i === 1 && <svg viewBox="0 0 10 10" className="mr-0.5 ml-0.5 size-2.5" fill="none" stroke="#000"><path d="M.5 3h9v4h-9zM3.500 0v9M6.500 0v9M1 9.500h8" /></svg>}
                {value}
              </span>
            </td>
          </tr>
        ))}
      </tbody>
    </table>
    <svg className="pointer-events-none absolute top-[133px] left-[106px] h-[50px] w-[132px]" fill="none">
      <ellipse cx="66" cy="25" rx="63" ry="22" stroke="#f00" strokeWidth="3" />
    </svg>
    <ImeBar />
  </section>
);

const ImeBar = () => (
  <div className="absolute right-0 bottom-10 flex h-6 w-[166px] items-center border border-r-0 border-[#a9bdd6] bg-[#fbfdff] pl-3.5 text-[#2272c3]">
    <svg viewBox="0 0 28 28" className="absolute -top-0.5 -left-5 size-7">
      <path d="M2 4 23 0l4 22L6 27Q2 27 1 22z" fill="#f2541f" />
      <path d="M20 7C12 4 7 7 8 11s12 2 12 7-8 6-13 3" stroke="#fff" strokeWidth="3.500" fill="none" />
    </svg>
    <div className="flex flex-1 items-center justify-between pr-1">
      <button className="text-[14px] leading-5 font-bold">英</button>
      <button aria-label="标点"><svg viewBox="0 0 14 14" className="size-3.5" fill="currentColor"><circle cx="4" cy="4" r="2" /><path d="M9 6c4-1 4 4 0 6 1-2 1-3 0-3z" /></svg></button>
      <button aria-label="语音"><svg viewBox="0 0 14 16" className="h-4 w-3.5" fill="none" stroke="currentColor" strokeWidth="1.500"><rect x="4.500" y="1" width="5" height="9" rx="2.500" fill="currentColor" /><path d="M2 7c0 7 10 7 10 0M7 12v3M4 15h6" /></svg></button>
      <button aria-label="软键盘"><svg viewBox="0 0 16 12" className="h-3 w-4" fill="none" stroke="currentColor"><rect x=".5" y=".5" width="15" height="11" rx="1" strokeWidth="1.500" /><path d="M3 3.500h10M3 6h10" strokeDasharray="2 1" strokeWidth="1.500" /><path d="M4 9h8" /></svg></button>
      <button aria-label="账户" className="relative text-[#b3c1d6]"><svg viewBox="0 0 16 16" className="size-4" fill="currentColor"><circle cx="6" cy="3.500" r="3" /><path d="M0 14c0-9 12-9 12 0z" /></svg><span className="absolute -right-0.5 -bottom-0.5 bg-[#fbfdff] text-[9px] leading-2 font-bold text-[#98a8c0]">17</span></button>
      <button aria-label="皮肤"><svg viewBox="0 0 16 16" className="size-4" fill="currentColor"><path d="m5 1-4 2.500L2.500 7 4 6.500V15h8V6.500l1.500.5L15 3.500 11 1c-1 2-5 2-6 0z" /></svg></button>
      <button aria-label="工具箱"><svg viewBox="0 0 16 16" className="size-4" fill="currentColor"><path d="M15 4.500 12.500 6 10.500 5V2.500L12.500 1C9 0 6.500 3 7.500 6L1 12.500 3.500 15 10 8.500c3 1 6-1 5-4z" /></svg></button>
    </div>
  </div>
);

/* ── Status bar and taskbar ── */
const StatusBar = () => (
  <footer className={clsx('flex h-5 shrink-0 gap-0.5 bg-white leading-4', song)}>
    {[['X=126588 Y=5186', 'w-[148px]'], ['层高:3.55m', 'w-[78px]'], ['底标高:-3.58m', 'w-[98px]'], ['1(2)', 'w-12'], ['按鼠标左键指定第一个角点，或拾取构件图元', 'flex-1']].map(([text, w]) => (
      <span key={text} className={clsx('shrink-0 border border-[#d2d2d2] bg-linear-to-b from-white to-[#f0f0f0] pl-px whitespace-nowrap', w)}>{text}</span>
    ))}
  </footer>
);

const apps = [
  ['Edge', <path d="M1 13C2 1 22-2 23 12v3H8c1 5 8 6 13 3v4C12 26 3 23 4 14c1-4 4-6 6-6-2 1-2 3-2 3h9C17 3 6 5 1 13z" fill="#1583e0" />],
  ['应用商店', <><path d="M2 8h20v14H2z" fill="#fff" /><path d="M8 8c0-7 8-7 8 0" stroke="#fff" strokeWidth="1.500" fill="none" /><path d="M7 11h4v4H7zM12.500 11h4v4h-4zM7 16h4v4H7zM12.500 16h4v4h-4z" fill="#000" /></>],
  ['文件资源管理器', <><path d="M2 3h8l1 2h11v16H2z" fill="#f6d778" /><path d="M2 8h20v13H2z" fill="#fbe69f" /><path d="M6 22v-8h12v8h-4v-4h-4v4z" fill="#38aee4" /></>],
  ['浏览器', <><circle cx="12" cy="12" r="11" fill="#3fae2a" /><circle cx="12" cy="12" r="10" fill="#62c83c" /><path d="M6 13h11c0-9-11-8-11 0s9 7 11 3" stroke="#fff" strokeWidth="2.500" fill="none" /><path d="M3 21C8 20 18 12 21 3" stroke="#2f8f1e" strokeWidth="1.200" fill="none" /></>],
  ['广联达', <><rect width="24" height="24" rx="4" fill="#0a8ef0" /><path d="M12 19V7a3 3 0 0 1 3-3M5 12h14M5 12V9M19 12c0 4-3 7-7 7-3 0-5-1-6-3" stroke="#fff" strokeWidth="2" fill="none" /></>],
  ['记事本', <><rect x="1" y="1" width="22" height="22" rx="2" fill="#f39c1c" /><path d="M4 4h13l2 15H4z" fill="#fff3d2" /><path d="M6 8h8M6 11h8M6 14h6" stroke="#b06a10" /><path d="m11 16 9-14 2 1-8 14z" fill="#a33c12" /></>],
  ['帮助', <><path d="M5 11h8v12H5z" fill="#fff" /><path d="M6.500 14h5M6.500 17h5M6.500 20h5" stroke="#555" /><path d="M12 6c0-5 8-5 8-1s-4 3-4 7M16 14v3" stroke="#ff0" strokeWidth="3" fill="none" /></>],
];

const Taskbar = () => (
  <footer className="flex h-10 shrink-0 bg-[#010a0d]">
    <button aria-label="开始" className="flex w-12 items-center justify-center bg-black">
      <svg viewBox="0 0 16 16" className="size-4" fill="#fff"><path d="m0 2.200 6.500-.9v6.200H0zM7.500 1.200 16 0v7.500H7.500zM0 8.500h6.500v6.200L0 13.800zM7.500 8.500H16V16l-8.500-1.200z" /></svg>
    </button>
    <label className="flex w-[344px] items-center gap-1.5 bg-[#333] px-2">
      <svg viewBox="0 0 22 22" className="size-[22px]" fill="none"><circle cx="11" cy="11" r="9" stroke="#fff" strokeWidth="2.500" /></svg>
      <input placeholder="在这里输入你要搜索的内容" aria-label="搜索" className="min-w-0 flex-1 bg-transparent text-[14px] placeholder:text-[#a0a0a0]" />
      <svg viewBox="0 0 12 18" className="mr-1.5 h-[18px] w-3" fill="none" stroke="#a0a0a0"><rect x="3.500" y=".5" width="5" height="11" /><path d="M.5 7v7h11V7M6 14v3M3 17.500h6" /></svg>
    </label>
    <button aria-label="任务" className="ml-0.5 flex w-[49px] items-center justify-center">
      <svg viewBox="0 0 22 22" className="size-[22px]" fill="#f0f0f0" stroke="#010a0d"><path d="M11 11C4 13 0 11 1 6c0-5 5-6 8-4 2 1 3 4 2 9z" /><path d="M11 11C9 4 11 0 16 1c5 0 6 5 4 8-1 2-4 3-9 2z" /><path d="M11 11c7-2 11 0 10 5 0 5-5 6-8 4-2-1-3-4-2-9z" /><path d="M11 11c2 7 0 11-5 10-5 0-6-5-4-8 1-2 4-3 9-2z" /></svg>
    </button>
    <button aria-label="提醒" className="relative flex w-[49px] items-center justify-center">
      <svg viewBox="0 0 22 22" className="size-[22px]" fill="none" stroke="#c8c8c8" strokeWidth="1.500"><path d="M14 3A8.500 8.500 0 1 0 19 16M18 9a6.500 6.500 0 1 0-7 8.500M11 8a3 3 0 0 1 3.500 3.500c0 4-6 4-6 .5" /></svg>
      <svg viewBox="0 0 16 16" className="absolute top-1 right-2 size-3.5" fill="#f0ad18"><path d="M8 0c5 0 5 5 5 8l3 4H0l3-4c0-3 0-8 5-8zM6 13h4v2H6z" /></svg>
    </button>
    <span className="mx-2.5 w-1 self-center border-x border-[#444] py-2" />
    {apps.map(([label, art], i) => (
      <button key={label} aria-label={label} className={clsx('relative flex w-[49px] items-center justify-center', i === 4 && 'bg-[#33414a]')}>
        <svg viewBox="0 0 24 24" className="size-6">{art}</svg>
        {i > 1 && <span className={clsx('absolute bottom-0 h-0.5 bg-[#76b9f5]', i === 4 ? 'inset-x-0' : 'inset-x-1')} />}
      </button>
    ))}
  </footer>
);

export default function App() {
  return (
    <div className="relative flex h-screen flex-col overflow-hidden bg-[#f0f0f0] font-['Open_Sans','Noto_Sans_CJK_SC',sans-serif] text-[12px] leading-4 text-black">
      <TitleBar />
      <MenuBar />
      <MainToolbar />
      <div className="mt-px flex min-h-0 flex-1 gap-[5px]">
        <Sidebar />
        <main className="flex min-w-0 flex-1 flex-col">
          <EditBars />
          <Drawing />
          <SnapBar />
          <BarEditor />
        </main>
      </div>
      <StatusBar />
      <Taskbar />
      <PropertyWindow />
    </div>
  );
}
